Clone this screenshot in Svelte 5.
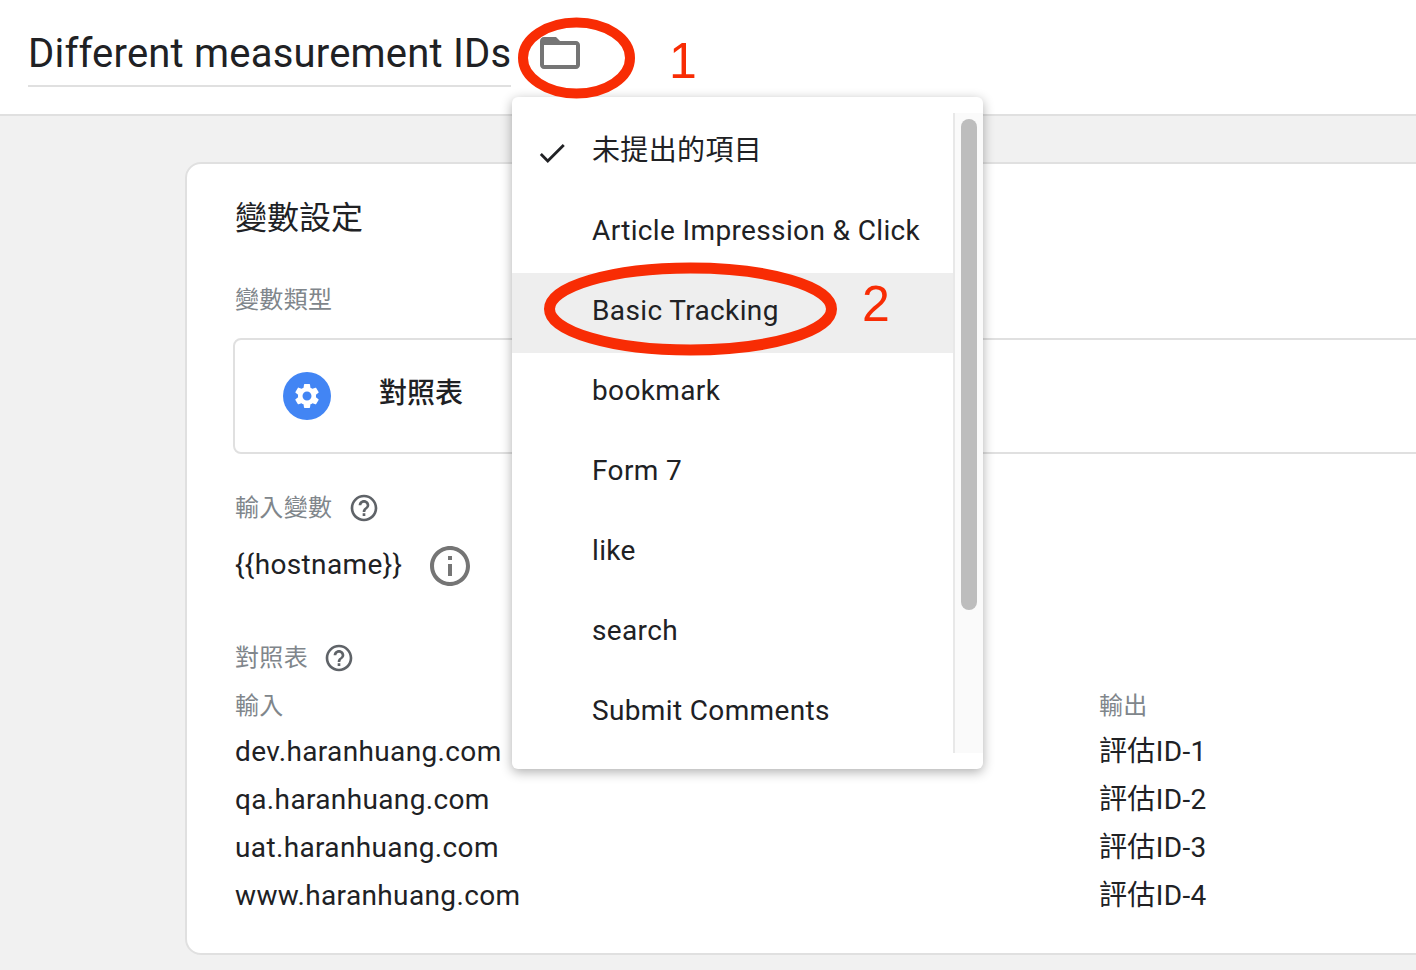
<script>
	const menuItems = [
		{ label: '未提出的項目', checked: true },
		{ label: 'Article Impression & Click' },
		{ label: 'Basic Tracking', active: true },
		{ label: 'bookmark' },
		{ label: 'Form 7' },
		{ label: 'like' },
		{ label: 'search' },
		{ label: 'Submit Comments' }
	];

	const rows = [
		['dev.haranhuang.com', '評估ID-1'],
		['qa.haranhuang.com', '評估ID-2'],
		['uat.haranhuang.com', '評估ID-3'],
		['www.haranhuang.com', '評估ID-4']
	];

	const helpPath =
		'M11 18h2v-2h-2v2zm1-16C6.48 2 2 6.48 2 12s4.48 10 10 10 10-4.48 10-10S17.52 2 12 2zm0 18c-4.41 0-8-3.59-8-8s3.59-8 8-8 8 3.59 8 8-3.59 8-8 8zm0-14c-2.21 0-4 1.79-4 4h2c0-1.1.9-2 2-2s2 .9 2 2c0 2-3 1.75-3 5h2c0-2.25 3-2.5 3-5 0-2.21-1.79-4-4-4z';
</script>

<div class="page">
	<header class="topbar">
		<h1 class="title">Different measurement IDs</h1>
		<svg class="folder" viewBox="0 0 24 24" aria-hidden="true">
			<path d="M20 6h-8l-2-2H4c-1.1 0-2 .9-2 2v12c0 1.1.9 2 2 2h16c1.1 0 2-.9 2-2V8c0-1.1-.9-2-2-2zm0 12H4V8h16v10z" />
		</svg>
	</header>

	<main class="content">
		<section class="card">
			<h2 class="card-title">變數設定</h2>
			<div class="label type-label">變數類型</div>
			<div class="type-box">
				<span class="type-icon">
					<svg viewBox="0 0 24 24" aria-hidden="true">
						<path d="M19.14 12.94c.04-.3.06-.61.06-.94 0-.32-.02-.64-.07-.94l2.03-1.58c.18-.14.23-.41.12-.61l-1.92-3.32c-.12-.22-.37-.29-.59-.22l-2.39.96c-.5-.38-1.03-.7-1.62-.94l-.36-2.54c-.04-.24-.24-.41-.48-.41h-3.84c-.24 0-.43.17-.47.41l-.36 2.54c-.59.24-1.13.57-1.62.94l-2.39-.96c-.22-.08-.47 0-.59.22L2.74 8.87c-.12.21-.08.47.12.61l2.03 1.58c-.05.3-.09.63-.09.94s.02.64.07.94l-2.03 1.58c-.18.14-.23.41-.12.61l1.92 3.32c.12.22.37.29.59.22l2.39-.96c.5.38 1.03.7 1.62.94l.36 2.54c.05.24.24.41.48.41h3.84c.24 0 .44-.17.47-.41l.36-2.54c.59-.24 1.13-.56 1.62-.94l2.39.96c.22.08.47 0 .59-.22l1.92-3.32c.12-.22.07-.47-.12-.61l-2.01-1.58zM12 15.6c-1.98 0-3.6-1.62-3.6-3.6s1.62-3.6 3.6-3.6 3.6 1.62 3.6 3.6-1.62 3.6-3.6 3.6z" />
					</svg>
				</span>
				<span class="type-name">對照表</span>
			</div>

			<div class="label with-help input-label">
				輸入變數
				<svg class="help" viewBox="0 0 24 24" aria-hidden="true"><path d={helpPath} /></svg>
			</div>
			<div class="variable">
				<span>{'{{hostname}}'}</span>
				<svg class="info" viewBox="0 0 24 24" aria-hidden="true">
					<path d="M11 7h2v2h-2zm0 4h2v6h-2zm1-9C6.48 2 2 6.48 2 12s4.48 10 10 10 10-4.48 10-10S17.52 2 12 2zm0 18c-4.41 0-8-3.59-8-8s3.59-8 8-8 8 3.59 8 8-3.59 8-8 8z" />
				</svg>
			</div>

			<div class="label with-help table-label">
				對照表
				<svg class="help" viewBox="0 0 24 24" aria-hidden="true"><path d={helpPath} /></svg>
			</div>
			<div class="table">
				<div class="label">輸入</div>
				<div class="label">輸出</div>
				{#each rows as row}
					<div class="cell">{row[0]}</div>
					<div class="cell">{row[1]}</div>
				{/each}
			</div>
		</section>
	</main>

	<div class="menu">
		<ul class="menu-list">
			{#each menuItems as item}
				<li class="menu-item" class:active={item.active}>
					{#if item.checked}
						<svg class="check" viewBox="0 0 24 24" aria-hidden="true">
							<path d="M9 16.17L4.83 12l-1.42 1.41L9 19 21 7l-1.41-1.41z" />
						</svg>
					{/if}
					{item.label}
				</li>
			{/each}
		</ul>
		<div class="scroll-track"><div class="scroll-thumb"></div></div>
	</div>

	<svg class="marks" viewBox="0 0 1416 970" aria-hidden="true">
		<ellipse class="mark-1" cx="576.5" cy="58" rx="53.5" ry="35.5" />
		<ellipse class="mark-2" cx="690.5" cy="309" rx="141" ry="41" />
	</svg>
	<span class="step step-1">1</span>
	<span class="step step-2">2</span>
</div>

<style>
	:global(body) {
		margin: 0;
		background: #f1f1f1;
	}

	.page {
		position: relative;
		width: 1416px;
		height: 970px;
		overflow: hidden;
		font-family: Roboto, "Noto Sans CJK TC", sans-serif;
		color: #202124;
	}

	.topbar {
		display: flex;
		align-items: flex-start;
		height: 114px;
		padding-left: 28px;
		background: #fff;
		border-bottom: 2px solid #e0e0e0;
	}

	.title {
		margin: 29px 0 0;
		padding-bottom: 7px;
		font-size: 40px;
		font-weight: 400;
		line-height: 49px;
		letter-spacing: 0.2px;
		border-bottom: 2px solid #e0e0e0;
	}

	.folder {
		width: 48px;
		height: 48px;
		margin: 29px 0 0 25px;
		fill: #757575;
	}

	.content {
		padding: 46px 0 0 185px;
	}

	.card {
		box-sizing: border-box;
		width: 1400px;
		height: 793px;
		padding: 34px 0 0 48px;
		background: #fff;
		border: 2px solid #e0e0e0;
		border-radius: 16px;
	}

	.card-title {
		margin: 0;
		font-size: 32px;
		font-weight: 400;
		line-height: 40px;
	}

	.label {
		font-size: 24px;
		line-height: 32px;
		letter-spacing: 0.35px;
		color: #80868b;
	}

	.type-label {
		margin-top: 46px;
	}

	.type-box {
		display: flex;
		align-items: center;
		gap: 48px;
		height: 112px;
		margin: 22px 0 0 -2px;
		padding-left: 48px;
		border: 2px solid #e0e0e0;
		border-radius: 8px;
	}

	.type-icon {
		display: flex;
		align-items: center;
		justify-content: center;
		width: 48px;
		height: 48px;
		border-radius: 50%;
		background: #4285f4;
	}

	.type-icon svg {
		width: 30px;
		height: 30px;
		fill: #fff;
	}

	.type-name {
		font-size: 28px;
		font-weight: 500;
		line-height: 36px;
		margin-top: -4px;
	}

	.with-help {
		display: flex;
		align-items: center;
	}

	.help {
		width: 32px;
		height: 32px;
		margin-left: 16px;
		fill: #5f6368;
	}

	.input-label {
		margin-top: 38px;
	}

	.variable {
		display: flex;
		align-items: center;
		gap: 24px;
		height: 48px;
		margin-top: 16px;
		font-size: 28px;
		letter-spacing: 0.36px;
	}

	.info {
		width: 48px;
		height: 48px;
		margin-top: 4px;
		fill: #757575;
	}

	.table-label {
		margin-top: 54px;
	}

	.table-label .help {
		margin-left: 15px;
	}

	.table {
		display: grid;
		grid-template-columns: 864px 1fr;
		grid-template-rows: 32px repeat(4, 48px);
		margin-top: 16px;
	}

	.table .label {
		margin-bottom: 5px;
	}

	.cell {
		position: relative;
		top: 6px;
		font-size: 28px;
		line-height: 48px;
		letter-spacing: 0.36px;
	}

	.menu {
		position: absolute;
		left: 512px;
		top: 97px;
		display: flex;
		width: 471px;
		height: 672px;
		background: #fff;
		border-radius: 6px;
		box-shadow: 0 3px 12px rgba(0, 0, 0, 0.32);
	}

	.menu-list {
		box-sizing: border-box;
		width: 441px;
		margin: 0;
		padding: 16px 0 0;
		list-style: none;
	}

	.menu-item {
		position: relative;
		box-sizing: border-box;
		display: flex;
		align-items: center;
		height: 80px;
		padding: 0 0 4px 80px;
		font-size: 28px;
		line-height: 36px;
		letter-spacing: 0.36px;
	}

	.menu-item.active {
		background: #eeeeee;
	}

	.check {
		position: absolute;
		left: 23px;
		top: 23px;
		width: 34px;
		height: 34px;
		fill: #202124;
	}

	.scroll-track {
		box-sizing: border-box;
		width: 30px;
		height: 640px;
		margin-top: 16px;
		padding: 6px 0 0 6px;
		background: #fafafa;
		border-left: 2px solid #e8e8e8;
	}

	.scroll-thumb {
		width: 16px;
		height: 491px;
		border-radius: 8px;
		background: #bdbdbd;
	}

	.marks {
		position: absolute;
		inset: 0;
		width: 1416px;
		height: 970px;
		fill: none;
		stroke: #f82c04;
		pointer-events: none;
	}

	.mark-1 {
		stroke-width: 10;
	}

	.mark-2 {
		stroke-width: 11;
	}

	.step {
		position: absolute;
		font-family: "Liberation Sans", sans-serif;
		font-size: 50px;
		line-height: 50px;
		color: #f82c04;
	}

	.step-1 {
		left: 669px;
		top: 36px;
	}

	.step-2 {
		left: 862px;
		top: 279px;
	}
</style>
